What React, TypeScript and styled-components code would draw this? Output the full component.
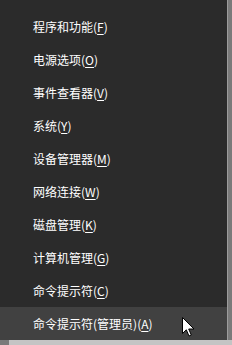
import React from "react";
import styled, { createGlobalStyle } from "styled-components";

const GlobalStyle = createGlobalStyle`
  html, body {
    margin: 0;
    padding: 0;
    background: #7a7a7a;
  }
  body {
    font-family: "Noto Sans CJK SC", "Noto Sans", sans-serif;
  }
`;

const Screen = styled.div`
  width: 232px;
  height: 345px;
  display: flex;
  flex-direction: column;
  overflow: hidden;
  position: relative;
  background: #7a7a7a;
`;

const Menu = styled.ul`
  list-style: none;
  margin: 0;
  padding: 10px 0 0 0;
  width: 227px;
  height: 330px;
  background: #2b2b2b;
  border-right: 1px solid #9c9c9c;
  border-top: 0;
`;

const Item = styled.li<{ $active?: boolean }>`
  height: 33px;
  display: flex;
  align-items: center;
  padding-left: 33px;
  margin-bottom: ${(p) => (p.$active ? "0" : "0")};
  background: ${(p) => (p.$active ? "#414141" : "transparent")};
  color: #ffffff;
  font-size: 12px;
  letter-spacing: 0;
  white-space: nowrap;
`;

const Key = styled.span`
  text-decoration: underline;
  text-underline-offset: 2px;
`;

const BottomStrip = styled.div`
  height: 5px;
  margin-left: 9px;
  background: #c4c4c4;
`;

const Cursor = styled.svg`
  position: absolute;
  left: 182px;
  top: 317px;
`;

const items: [string, string][] = [
  ["程序和功能", "F"],
  ["电源选项", "O"],
  ["事件查看器", "V"],
  ["系统", "Y"],
  ["设备管理器", "M"],
  ["网络连接", "W"],
  ["磁盘管理", "K"],
  ["计算机管理", "G"],
  ["命令提示符", "C"],
  ["命令提示符(管理员)", "A"],
];

function App() {
  return (
    <>
      <GlobalStyle />
      <Screen>
        <Menu>
          {items.map(([label, key], i) => (
            <Item key={key} $active={i === items.length - 1}>
              {label}(<Key>{key}</Key>)
            </Item>
          ))}
        </Menu>
        <BottomStrip />
        <Cursor width="13" height="20" viewBox="0 0 13 20">
          <path
            d="M0.5 0.5 L0.5 16.5 L4.3 12.8 L7 19 L9.3 18 L6.7 12 L12 12 Z"
            fill="#ffffff"
            stroke="#000000"
            strokeWidth="1"
            strokeLinejoin="miter"
          />
        </Cursor>
      </Screen>
    </>
  );
}

export default App;
